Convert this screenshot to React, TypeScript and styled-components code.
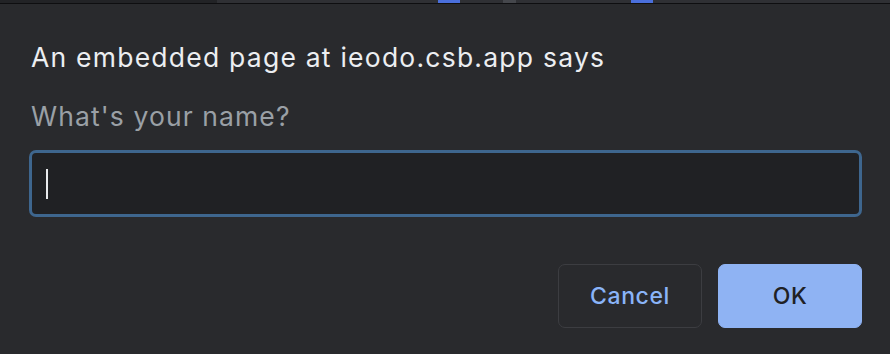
import React from "react";
import styled, { createGlobalStyle } from "styled-components";

const Global = createGlobalStyle`
  html, body { margin: 0; padding: 0; background: #292a2d; }
  body { font-family: Inter, "Noto Sans", sans-serif; -webkit-font-smoothing: antialiased; }
`;

const Page = styled.div`
  width: 890px;
  height: 354px;
  background: #292a2d;
  display: flex;
  flex-direction: column;
  overflow: hidden;
`;

const TopStrip = styled.div`
  height: 3px;
  background:
    linear-gradient(to right,
      #222326 0, #222326 217px,
      #2f3034 217px, #2f3034 438px,
      #4a6fdc 438px, #4a6fdc 460px,
      #2f3034 460px, #2f3034 503px,
      #45474c 503px, #45474c 516px,
      #2f3034 516px, #2f3034 631px,
      #4a6fdc 631px, #4a6fdc 653px,
      #2f3034 653px, #2f3034 100%);
  border-bottom: 1px solid #0e0e10;
`;

const Body = styled.div`
  display: flex;
  flex-direction: column;
  padding: 37px 28px 0 29px;
`;

const Title = styled.div`
  font-size: 26.5px;
  line-height: 32px;
  color: #eceef1;
  padding-left: 2px;
  letter-spacing: 1.23px;
`;

const Message = styled.div`
  margin-top: 27px;
  font-size: 26.5px;
  line-height: 32px;
  color: #9aa0a6;
  padding-left: 2px;
  letter-spacing: 1.1px;
`;

const Field = styled.div`
  margin-top: 18px;
  height: 67px;
  box-sizing: border-box;
  border: 3px solid #3e668e;
  border-radius: 7px;
  background: #202124;
  display: flex;
  align-items: center;
  padding-left: 14px;
`;

const Caret = styled.div`
  width: 2px;
  height: 30px;
  background: #e8eaed;
`;

const Actions = styled.div`
  margin-top: 47px;
  display: flex;
  justify-content: flex-end;
  gap: 16px;
`;

const Button = styled.button<{ $primary?: boolean }>`
  width: 144px;
  height: 64px;
  box-sizing: border-box;
  border-radius: 7px;
  font-family: Inter, "Noto Sans", sans-serif;
  font-size: 23px;
  font-weight: 500;
  letter-spacing: 0.6px;
  cursor: pointer;
  border: 1px solid ${(p) => (p.$primary ? "#8fb3f3" : "#3c3d41")};
  background: ${(p) => (p.$primary ? "#8fb3f3" : "transparent")};
  color: ${(p) => (p.$primary ? "#202124" : "#8ab4f8")};
`;

export default function App() {
  return (
    <Page>
      <Global />
      <TopStrip />
      <Body>
        <Title>An embedded page at ieodo.csb.app says</Title>
        <Message>What's your name?</Message>
        <Field>
          <Caret />
        </Field>
        <Actions>
          <Button>Cancel</Button>
          <Button $primary>OK</Button>
        </Actions>
      </Body>
    </Page>
  );
}
